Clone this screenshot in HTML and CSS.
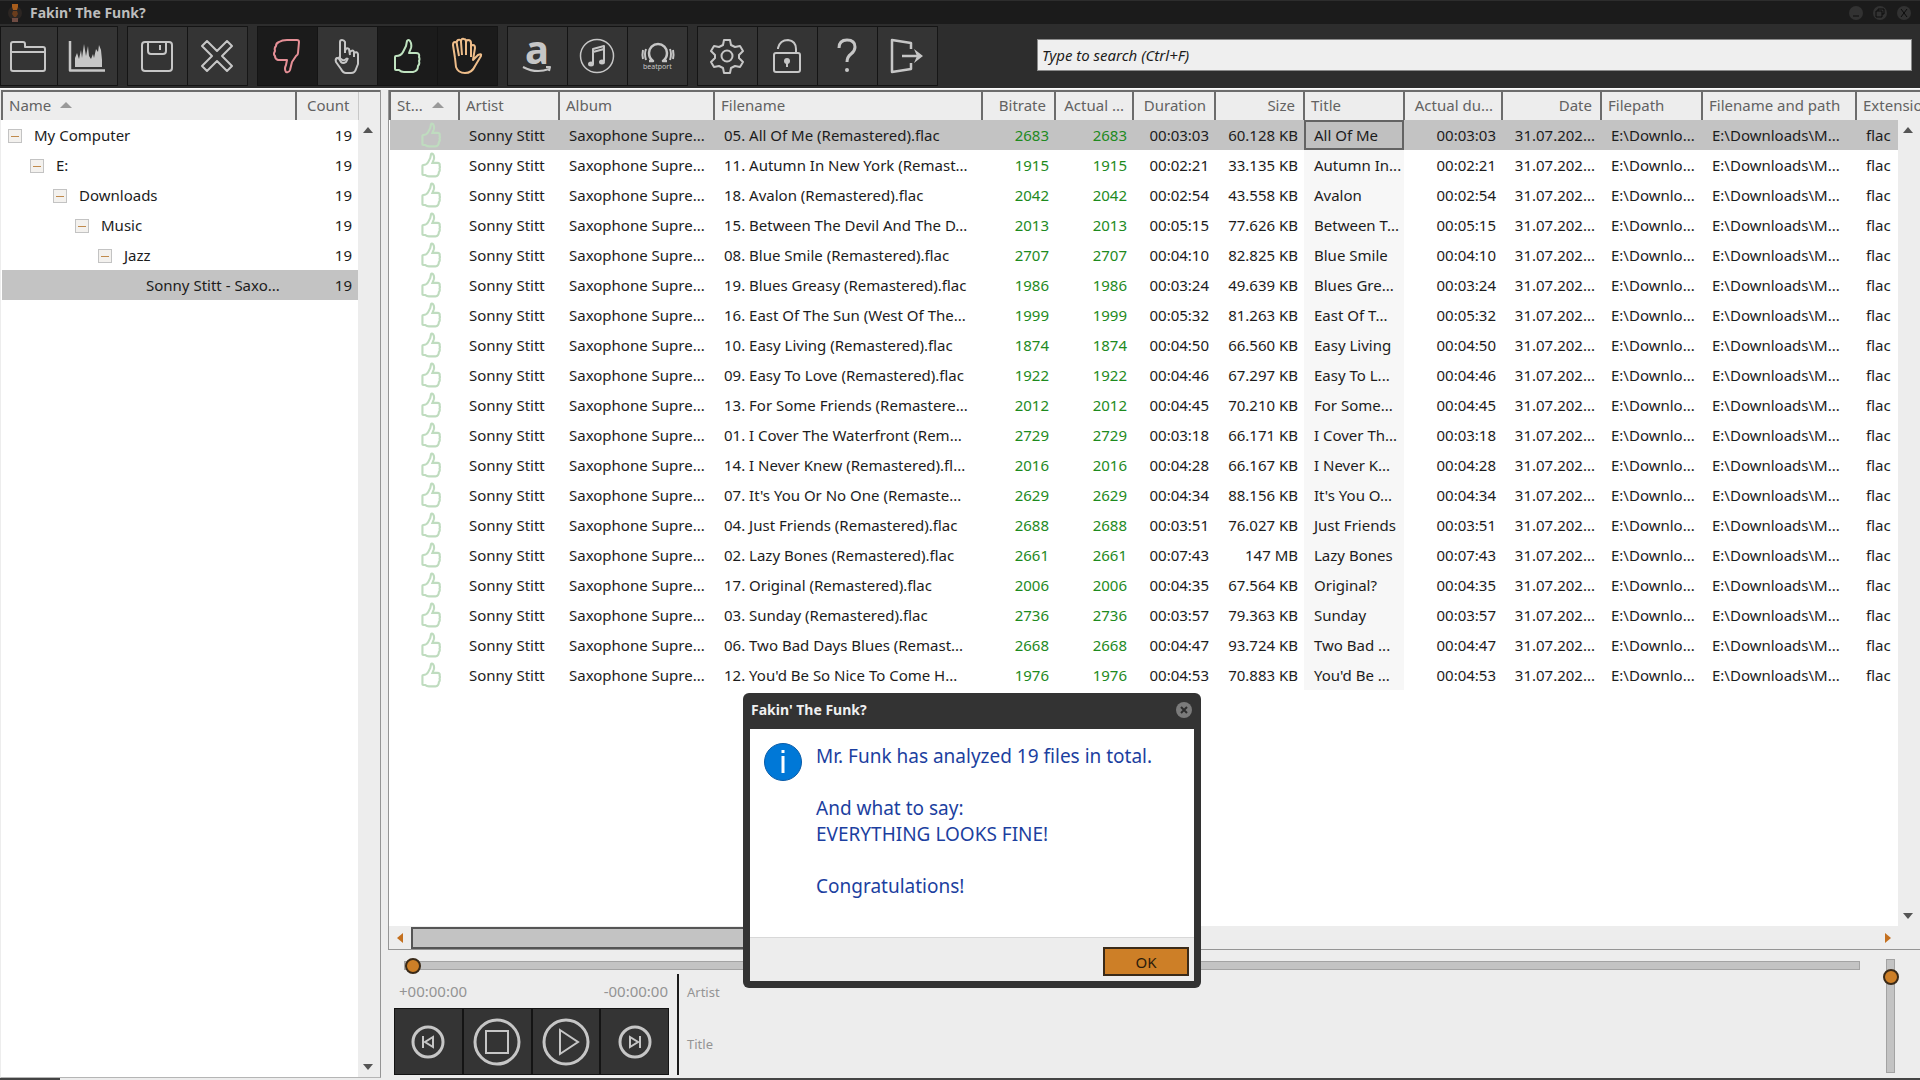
FILE: index.html
```html
<!DOCTYPE html>
<html lang="en">
<head>
<meta charset="utf-8">
<title>Fakin' The Funk?</title>
<link rel="stylesheet" href="styles.css">
</head>
<body>
<svg class="defs" aria-hidden="true">
  <symbol id="thumb" viewBox="0 0 28 36">
    <path d="M3 18 Q8 18 10 14 L13 8 L14 3 Q15 1 17 3 Q19 6 18 10 L16 15 H23 Q27 15 26 19 Q27 21 26 23 Q27 26 25 28 Q25 33 20 34 H11 Q8 34 6 32 H3 Q2 32 2 31 V19 Q2 18 3 18 Z"/>
  </symbol>
</svg>
<div class="app">
  <header class="titlebar">
    <svg class="logo" width="16" height="20" viewBox="0 0 16 20"><circle cx="8" cy="10" r="7" fill="#2c2623"/><path d="M5 1h6v3l-1 3H6L5 4z" fill="#a85d1c"/><path d="M6 8h4l1 3-2 3H7l-2-3z" fill="#6b3d1c"/><path d="M5 15h6v4H5z" fill="#6e4b42"/></svg>
    <h1 class="app-title">Fakin' The Funk?</h1>
    <div class="window-buttons">
      <button class="win" aria-label="Minimize"><svg width="16" height="16" viewBox="0 0 16 16"><circle cx="8" cy="8" r="7"/><path d="M5 11h6"/></svg></button>
      <button class="win" aria-label="Restore"><svg width="16" height="16" viewBox="0 0 16 16"><circle cx="8" cy="8" r="7"/><path d="M6 6V4h6v5h-2M4 6h6v6H4z"/></svg></button>
      <button class="win" aria-label="Close"><svg width="16" height="16" viewBox="0 0 16 16"><circle cx="8" cy="8" r="7"/><path d="M5 4l6 8M11 4l-6 8"/></svg></button>
    </div>
  </header>

  <div class="toolbar">
    <div class="group">
      <button class="tool first" aria-label="Open folder"><svg viewBox="0 0 40 40"><path d="M3 33V8q0-2 2-2h10q2 0 2 2v3h18q2 0 2 2v20q0 2-2 2H5q-2 0-2-2zM3 16h34"/></svg></button>
      <button class="tool" aria-label="Spectrum"><svg viewBox="0 0 40 40"><path d="M3 5v29.500h35" stroke-width="2.500"/><path class="solid" d="M8 31V22l2-5 2 6 2-9 1 8 2-14 2 12 2-10 1 10 2 3 2-5 1 4 2-9 2 3 1-7 2 5 1 10v7z"/></svg></button>
    </div>
    <div class="group">
      <button class="tool" aria-label="Save"><svg viewBox="0 0 40 40"><path d="M5 32V9q0-3 3-3h24q3 0 3 3v23q0 3-3 3H8q-3 0-3-3zM11 6v9q0 3 3 3h12q3 0 3-3V6M23 9v5"/></svg></button>
      <button class="tool" aria-label="Delete"><svg viewBox="0 0 40 40"><path d="M10 5l10 10L30 5l5 5-10 10 10 10-5 5-10-10-10 10-5-5 10-10L5 10z"/></svg></button>
    </div>
    <div class="group">
      <button class="tool dark red" aria-label="Fake"><svg viewBox="0 0 40 40"><path d="M12 6Q15 4 20 4H30Q32 4 32 6L31 17Q31 19 29 20L25 26 23 34Q22 37 19 36 17 33 19 29L20 24H11Q8 23 8 20 6 18 8 15 7 12 9 10 9 7 12 6Z"/></svg></button>
      <button class="tool" aria-label="Suspicious"><svg viewBox="0 0 40 40"><path d="M13 22V6q0-2 2-2t3 2v11M18 15q1-4 4-2l1 6M23 16q3-3 4 0v5M27 17q3-2 4 1v10l-2 5q-1 4-5 4h-5q-3 0-5-4l-5-7q-1-3 1-4l4 1q3 3 6-1"/><path d="M11 21l3 5q2 2 5 0l2-4"/></svg></button>
      <button class="tool dark green" aria-label="Good"><svg viewBox="0 0 40 40"><use href="#thumb" x="6" y="2" width="28" height="36"/></svg></button>
      <button class="tool dark orange" aria-label="Unchecked"><svg viewBox="0 0 40 40"><path d="M8 22L6 9q0-3 2-3 2 0 2 3l2 11M10 9q-1-4 1-5 3-1 3 2l1 13M14 6q0-4 3-3 2 0 2 3v13M19 7q0-3 2-3 3 0 3 3v14M24 11q0-2 2-2t2 3l-2 12 5-5q4-2 3 1l-6 10q-3 7-10 7-7 0-9-6L8 22"/></svg></button>
    </div>
    <div class="group">
      <button class="tool" aria-label="Amazon"><svg viewBox="0 0 40 40"><text class="letter" x="20" y="28">a</text><path d="M6 31q13 7 26 2" stroke-width="2"/><path d="M29 31l4 0-1 4"/></svg></button>
      <button class="tool" aria-label="iTunes"><svg viewBox="0 0 40 40"><circle cx="20" cy="20" r="16.500" stroke-width="1.500"/><path d="M16 28V13l11-3v15M16 16l11-3"/><ellipse class="solid" cx="14" cy="28" rx="3" ry="2.500"/><ellipse class="solid" cx="25" cy="26" rx="3" ry="2.500"/></svg></button>
      <button class="tool" aria-label="Beatport"><svg viewBox="0 0 40 40"><path d="M12 25h4q-4-3-4-8a9 9 0 0 1 18 0q0 5-4 8h4" stroke-width="2.500"/><path d="M9 13q-2 5 0 11M6 14q-1 5 0 9M33 13q2 5 0 11M36 14q1 5 0 9"/><text x="6" y="33">beatport</text></svg></button>
    </div>
    <div class="group">
      <button class="tool" aria-label="Settings"><svg viewBox="0 0 40 40"><path d="M17 4h6l1 5 4 2 5-1 3 5-4 4v3l4 4-3 5-5-1-4 2-1 5h-6l-1-5-4-2-5 1-3-5 4-4v-3l-4-4 3-5 5 1 4-2z"/><circle cx="20" cy="20" r="5.500"/></svg></button>
      <button class="tool" aria-label="Unlock"><svg viewBox="0 0 40 40"><rect x="7" y="17" width="26" height="19" rx="2"/><path d="M11 13v-1q2-8 10-8 8 1 8 9v4"/><circle class="solid" cx="20" cy="25" r="3"/><path d="M20 25v6"/></svg></button>
      <button class="tool" aria-label="Help"><svg viewBox="0 0 40 40"><path d="M12 12q0-8 8-8t8 7q0 4-4 7t-4 8" stroke-width="3"/><circle class="solid" cx="20" cy="34" r="2"/></svg></button>
      <button class="tool" aria-label="Exit"><svg viewBox="0 0 40 40"><path d="M24 13V7L5 4v32l19-3v-6M15 20h18" stroke-width="2.500"/><path class="solid" d="M27 13l9 7-9 7 3-7z"/></svg></button>
    </div>
    <input class="search" type="text" aria-label="Search" placeholder="Type to search (Ctrl+F)">
  </div>

  <main class="workspace">
    <section class="panel tree">
      <table class="grid tree-table">
        <colgroup><col><col class="w-count"><col class="w-bar"></colgroup>
        <thead><tr><th>Name <span class="sort"></span></th><th class="num">Count</th><th class="blank"></th></tr></thead>
        <tbody>
          <tr><td class="lv0"><button class="fold" aria-label="Collapse"></button>My Computer</td><td class="num">19</td><td></td></tr>
          <tr><td class="lv1"><button class="fold" aria-label="Collapse"></button>E:</td><td class="num">19</td><td></td></tr>
          <tr><td class="lv2"><button class="fold" aria-label="Collapse"></button>Downloads</td><td class="num">19</td><td></td></tr>
          <tr><td class="lv3"><button class="fold" aria-label="Collapse"></button>Music</td><td class="num">19</td><td></td></tr>
          <tr><td class="lv4"><button class="fold" aria-label="Collapse"></button>Jazz</td><td class="num">19</td><td></td></tr>
          <tr class="selected"><td class="lv5">Sonny Stitt - Saxo...</td><td class="num">19</td><td></td></tr>
        </tbody>
      </table>
      <div class="vbar"><span class="up"></span><span class="down"></span></div>
    </section>

    <div class="right">
      <section class="panel files">
        <table class="grid file-table">
          <colgroup><col class="w-state"><col class="w-artist"><col class="w-album"><col class="w-file"><col class="w-rate"><col class="w-actual"><col class="w-dur"><col class="w-size"><col class="w-artist"><col class="w-adur"><col class="w-date"><col class="w-path"><col class="w-full"><col></colgroup>
          <thead><tr><th>St... <span class="sort"></span></th><th>Artist</th><th>Album</th><th>Filename</th><th>Bitrate</th><th>Actual ...</th><th>Duration</th><th>Size</th><th>Title</th><th>Actual du...</th><th>Date</th><th>Filepath</th><th>Filename and path</th><th>Extension</th></tr></thead>
          <tbody>
<tr class="selected"><td><svg><use href="#thumb"/></svg><td>Sonny Stitt<td>Saxophone Supre...<td>05. All Of Me (Remastered).flac<td>2683<td>2683<td>00:03:03<td>60.128 KB<td>All Of Me<td>00:03:03<td>31.07.202...<td>E:\Downlo...<td>E:\Downloads\M...<td>flac
<tr><td><svg><use href="#thumb"/></svg><td>Sonny Stitt<td>Saxophone Supre...<td>11. Autumn In New York (Remast...<td>1915<td>1915<td>00:02:21<td>33.135 KB<td>Autumn In...<td>00:02:21<td>31.07.202...<td>E:\Downlo...<td>E:\Downloads\M...<td>flac
<tr><td><svg><use href="#thumb"/></svg><td>Sonny Stitt<td>Saxophone Supre...<td>18. Avalon (Remastered).flac<td>2042<td>2042<td>00:02:54<td>43.558 KB<td>Avalon<td>00:02:54<td>31.07.202...<td>E:\Downlo...<td>E:\Downloads\M...<td>flac
<tr><td><svg><use href="#thumb"/></svg><td>Sonny Stitt<td>Saxophone Supre...<td>15. Between The Devil And The D...<td>2013<td>2013<td>00:05:15<td>77.626 KB<td>Between T...<td>00:05:15<td>31.07.202...<td>E:\Downlo...<td>E:\Downloads\M...<td>flac
<tr><td><svg><use href="#thumb"/></svg><td>Sonny Stitt<td>Saxophone Supre...<td>08. Blue Smile (Remastered).flac<td>2707<td>2707<td>00:04:10<td>82.825 KB<td>Blue Smile<td>00:04:10<td>31.07.202...<td>E:\Downlo...<td>E:\Downloads\M...<td>flac
<tr><td><svg><use href="#thumb"/></svg><td>Sonny Stitt<td>Saxophone Supre...<td>19. Blues Greasy (Remastered).flac<td>1986<td>1986<td>00:03:24<td>49.639 KB<td>Blues Gre...<td>00:03:24<td>31.07.202...<td>E:\Downlo...<td>E:\Downloads\M...<td>flac
<tr><td><svg><use href="#thumb"/></svg><td>Sonny Stitt<td>Saxophone Supre...<td>16. East Of The Sun (West Of The...<td>1999<td>1999<td>00:05:32<td>81.263 KB<td>East Of T...<td>00:05:32<td>31.07.202...<td>E:\Downlo...<td>E:\Downloads\M...<td>flac
<tr><td><svg><use href="#thumb"/></svg><td>Sonny Stitt<td>Saxophone Supre...<td>10. Easy Living (Remastered).flac<td>1874<td>1874<td>00:04:50<td>66.560 KB<td>Easy Living<td>00:04:50<td>31.07.202...<td>E:\Downlo...<td>E:\Downloads\M...<td>flac
<tr><td><svg><use href="#thumb"/></svg><td>Sonny Stitt<td>Saxophone Supre...<td>09. Easy To Love (Remastered).flac<td>1922<td>1922<td>00:04:46<td>67.297 KB<td>Easy To L...<td>00:04:46<td>31.07.202...<td>E:\Downlo...<td>E:\Downloads\M...<td>flac
<tr><td><svg><use href="#thumb"/></svg><td>Sonny Stitt<td>Saxophone Supre...<td>13. For Some Friends (Remastere...<td>2012<td>2012<td>00:04:45<td>70.210 KB<td>For Some...<td>00:04:45<td>31.07.202...<td>E:\Downlo...<td>E:\Downloads\M...<td>flac
<tr><td><svg><use href="#thumb"/></svg><td>Sonny Stitt<td>Saxophone Supre...<td>01. I Cover The Waterfront (Rem...<td>2729<td>2729<td>00:03:18<td>66.171 KB<td>I Cover Th...<td>00:03:18<td>31.07.202...<td>E:\Downlo...<td>E:\Downloads\M...<td>flac
<tr><td><svg><use href="#thumb"/></svg><td>Sonny Stitt<td>Saxophone Supre...<td>14. I Never Knew (Remastered).fl...<td>2016<td>2016<td>00:04:28<td>66.167 KB<td>I Never K...<td>00:04:28<td>31.07.202...<td>E:\Downlo...<td>E:\Downloads\M...<td>flac
<tr><td><svg><use href="#thumb"/></svg><td>Sonny Stitt<td>Saxophone Supre...<td>07. It's You Or No One (Remaste...<td>2629<td>2629<td>00:04:34<td>88.156 KB<td>It's You O...<td>00:04:34<td>31.07.202...<td>E:\Downlo...<td>E:\Downloads\M...<td>flac
<tr><td><svg><use href="#thumb"/></svg><td>Sonny Stitt<td>Saxophone Supre...<td>04. Just Friends (Remastered).flac<td>2688<td>2688<td>00:03:51<td>76.027 KB<td>Just Friends<td>00:03:51<td>31.07.202...<td>E:\Downlo...<td>E:\Downloads\M...<td>flac
<tr><td><svg><use href="#thumb"/></svg><td>Sonny Stitt<td>Saxophone Supre...<td>02. Lazy Bones (Remastered).flac<td>2661<td>2661<td>00:07:43<td>147 MB<td>Lazy Bones<td>00:07:43<td>31.07.202...<td>E:\Downlo...<td>E:\Downloads\M...<td>flac
<tr><td><svg><use href="#thumb"/></svg><td>Sonny Stitt<td>Saxophone Supre...<td>17. Original (Remastered).flac<td>2006<td>2006<td>00:04:35<td>67.564 KB<td>Original?<td>00:04:35<td>31.07.202...<td>E:\Downlo...<td>E:\Downloads\M...<td>flac
<tr><td><svg><use href="#thumb"/></svg><td>Sonny Stitt<td>Saxophone Supre...<td>03. Sunday (Remastered).flac<td>2736<td>2736<td>00:03:57<td>79.363 KB<td>Sunday<td>00:03:57<td>31.07.202...<td>E:\Downlo...<td>E:\Downloads\M...<td>flac
<tr><td><svg><use href="#thumb"/></svg><td>Sonny Stitt<td>Saxophone Supre...<td>06. Two Bad Days Blues (Remast...<td>2668<td>2668<td>00:04:47<td>93.724 KB<td>Two Bad ...<td>00:04:47<td>31.07.202...<td>E:\Downlo...<td>E:\Downloads\M...<td>flac
<tr><td><svg><use href="#thumb"/></svg><td>Sonny Stitt<td>Saxophone Supre...<td>12. You'd Be So Nice To Come H...<td>1976<td>1976<td>00:04:53<td>70.883 KB<td>You'd Be ...<td>00:04:53<td>31.07.202...<td>E:\Downlo...<td>E:\Downloads\M...<td>flac
          </tbody>
        </table>
        <div class="vbar"><span class="up"></span><span class="down"></span></div>
        <div class="hbar"><span class="left"></span><div class="hthumb"></div><span class="rightward"></span></div>
      </section>

      <section class="player">
        <div class="player-main">
          <input class="seek" type="range" min="0" max="100" value="0" aria-label="Position">
          <div class="deck">
            <div class="controls">
              <div class="times"><span>+00:00:00</span><span>-00:00:00</span></div>
              <div class="buttons">
                <button class="ctl" aria-label="Previous"><svg viewBox="0 0 50 50"><circle cx="25" cy="25" r="15"/><path d="M20 19v12M30 20v10l-8-5z"/></svg></button>
                <button class="ctl" aria-label="Stop"><svg viewBox="0 0 50 50"><circle cx="25" cy="25" r="22"/><path d="M14 14h22v22h-22z"/></svg></button>
                <button class="ctl" aria-label="Play"><svg viewBox="0 0 50 50"><circle cx="25" cy="25" r="22"/><path d="M19 13v24l18-12z"/></svg></button>
                <button class="ctl" aria-label="Next"><svg viewBox="0 0 50 50"><circle cx="25" cy="25" r="15"/><path d="M30 19v12M20 20v10l8-5z"/></svg></button>
              </div>
            </div>
            <div class="now"><span>Artist</span><span>Title</span></div>
          </div>
        </div>
        <input class="volume" type="range" min="0" max="100" value="91" aria-label="Volume">
      </section>
    </div>
  </main>
  <footer class="edge"><span></span><span></span></footer>
</div>

<div class="dialog" role="dialog" aria-labelledby="dlg-title">
  <div class="dialog-head">
    <h2 class="dialog-title" id="dlg-title">Fakin' The Funk?</h2>
    <button class="dialog-close" aria-label="Close"><svg width="16" height="16" viewBox="0 0 16 16"><circle cx="8" cy="8" r="8" fill="#7b7b7b"/><path d="M5 5l6 6M11 5l-6 6" stroke="#2d2d2d" stroke-width="2"/></svg></button>
  </div>
  <div class="dialog-body">
    <svg class="info" width="38" height="38" viewBox="0 0 38 38"><circle cx="19" cy="19" r="18.500" fill="#0078d7" stroke="#0a5ca8"/><path d="M19 13v17M19 7v3" stroke="#fff" stroke-width="3"/></svg>
    <div class="message">
      <p>Mr. Funk has analyzed 19 files in total.</p>
      <p>And what to say:<br>EVERYTHING LOOKS FINE!</p>
      <p>Congratulations!</p>
    </div>
  </div>
  <div class="dialog-foot"><button class="ok">OK</button></div>
</div>
</body>
</html>
```
FILE: styles.css
```css
* { box-sizing: border-box; }
body {
  margin: 0;
  font: 15px/20px "Noto Sans", "Open Sans", sans-serif;
  color: #1c1c1c;
  background: #ededed;
}
button { padding: 0; border: 0; background: none; font: inherit; color: inherit; }
.defs { position: absolute; width: 0; height: 0; }
.app { display: flex; flex-direction: column; height: 100vh; overflow: hidden; }

/* Title bar */
.titlebar {
  display: flex;
  align-items: center;
  height: 24px;
  padding: 0 8px 0 7px;
  background: #1b1b1b;
  border-top: 1px solid #2d2d2d;
}
.app-title { flex: 1; margin: 0 0 0 7px; font-size: 14px; line-height: 20px; color: #bdbdbd; }
.window-buttons { display: flex; gap: 8px; }
.win { display: flex; }
.win svg { fill: #323232; }
.win path { fill: none; stroke-width: 1; stroke: #0c0c0c; }

/* Toolbar */
.toolbar {
  display: flex;
  flex: none;
  gap: 10px;
  height: 64px;
  padding: 2px 8px 2px 0;
  background: #2d2d2d;
}
.group { display: flex; border-right: 1px solid #161616; margin-right: -1px; }
.tool {
  display: flex;
  align-items: center;
  justify-content: center;
  width: 60px;
  height: 60px;
  padding: 0 1px 1px 0;
  background: #343434;
  border: 1px solid #141414;
  border-right: 0;
}
.tool.first { width: 57px; padding-right: 3px; }
.tool.dark { background: #1b1b1b; }
.tool svg { width: 40px; height: 40px; fill: none; stroke: #c6c6c6; stroke-width: 2; stroke-linejoin: round; }
.tool .solid { fill: #c6c6c6; stroke: none; }
.tool text { fill: #c6c6c6; stroke: none; font-size: 7px; }
.tool .letter { font-size: 40px; font-weight: 700; text-anchor: middle; }
.tool.red svg { stroke: #e58f96; }
.tool.green svg { stroke: #bfe3c0; }
.tool.orange svg { stroke: #eebd8a; }
.search {
  flex: none;
  width: 875px;
  height: 32px;
  margin: 13px 0 0 auto;
  padding: 0 4px;
  font: italic 15px/20px "Noto Sans", "Open Sans", sans-serif;
  color: #1c1c1c;
  background: #efefef;
  border: 1px solid #8a8a8a;
  border-radius: 0;
}
.search::placeholder { color: #1c1c1c; opacity: 1; }

/* Panels and tables */
.workspace { display: flex; flex: 1; gap: 7px; min-height: 0; padding-top: 1px; border-top: 1px solid #fafafa; }
.panel {
  display: grid;
  grid-template: 1fr / minmax(0, 1fr) 22px;
  min-height: 0;
  background: #fff;
  border: 1px solid #959595;
  border-top: 0;
}
.tree { width: 381px; border-left-color: #ededed; border-bottom-color: #b5b5b5; }
.right { display: flex; flex: 1; flex-direction: column; min-width: 0; }
.files { flex: 1; grid-template-rows: 1fr 23px; border-right: 0; }
.grid { grid-area: 1 / 1 / 2 / 3; align-self: start; width: 100%; table-layout: fixed; border-collapse: collapse; }
.grid th, .grid td {
  height: 30px;
  padding: 0 6px 0 10px;
  overflow: hidden;
  text-align: left;
  white-space: nowrap;
  font-weight: 400;
}
.grid th {
  padding: 0 8px 2px 6px;
  height: 29px;
  color: #626262;
  background: #ededed;
  border-left: 2px solid #6c6c6c;
}
.grid thead { border-top: 2px solid #6c6c6c; }
.grid .blank { border-left: 1px solid #c8c8c8; }
.grid .num { text-align: right; }
.grid td.num { padding-right: 6px; }
.sort {
  display: inline-block;
  margin-left: 5px;
  vertical-align: 3px;
  border: 6px solid transparent;
  border-top: 0;
  border-bottom: 6px solid #999;
}
.selected { background: #c3c3c3; }
.w-count { width: 62px; }
.w-bar { width: 22px; }
.lv0 { --indent: 6px; }
.lv1 { --indent: 28px; }
.lv2 { --indent: 51px; }
.lv3 { --indent: 73px; }
.lv4 { --indent: 96px; }
.lv5 { --indent: 144px; }
.tree-table td:first-child { padding: 0 0 0 var(--indent); }
.fold {
  width: 14px;
  height: 14px;
  margin-right: 12px;
  vertical-align: -1px;
  border: 1px solid #c3c3c3;
  background: linear-gradient(#c08a4c, #c08a4c) center / 8px 1px no-repeat #f3f1ee;
}
.w-state { width: 69px; }
.w-artist { width: 100px; }
.w-album { width: 155px; }
.w-file { width: 268px; }
.w-rate { width: 73px; }
.w-actual { width: 78px; }
.w-dur { width: 82px; }
.w-size { width: 89px; }
.w-adur { width: 98px; }
.w-date { width: 99px; }
.w-path { width: 101px; }
.w-full { width: 154px; }
.file-table :is(th, td):is(:nth-child(5), :nth-child(6), :nth-child(7), :nth-child(8), :nth-child(10), :nth-child(11)) { text-align: right; }
.file-table td:is(:nth-child(5), :nth-child(6)) { color: #1e8a1e; }
.file-table td:nth-child(9) { background: #f7f7f7; }
.file-table .selected td:nth-child(9) { background: #c0c0c0; outline: 2px solid #636363; outline-offset: -2px; }
.file-table td:first-child { padding: 0 0 0 31px; }
.file-table svg { display: block; width: 20px; height: 26px; fill: none; stroke: #bfdcbf; stroke-width: 3; }

/* Scroll bars */
.vbar {
  grid-area: 1 / 2;
  display: flex;
  flex-direction: column;
  align-items: center;
  justify-content: space-between;
  margin-top: 30px;
  padding: 7px 2px 7px 0;
  background: #ededed;
}
.up, .down { border: 5px solid transparent; }
.up { border-top: 0; border-bottom: 6px solid #555; }
.down { border-bottom: 0; border-top: 6px solid #555; }
.hbar { grid-area: 2 / 1 / 3 / 3; display: flex; align-items: center; padding: 0 29px 0 8px; background: #ededed; }
.hthumb { width: 50%; height: 22px; margin-left: 8px; background: #c3c3c3; border: 2px solid #555; }
.left { border: 5px solid transparent; border-left: 0; border-right: 6px solid #c4701f; }
.rightward { margin-left: auto; border: 5px solid transparent; border-right: 0; border-left: 6px solid #c4701f; }

/* Player */
.player { display: flex; flex: none; height: 128px; padding: 6px 22px 3px 6px; }
.player-main { display: flex; flex: 1; flex-direction: column; }
input[type="range"] { appearance: none; display: block; background: none; }
.player .seek { height: 20px; margin: 0 22px 0 10px; }
.seek::-webkit-slider-runnable-track { height: 9px; background: #c3c3c3; border: 1px solid #a3a3a3; }
input::-webkit-slider-thumb {
  appearance: none;
  width: 16px;
  height: 16px;
  background: #cd7f27;
  border: 2px solid #3a2a18;
  border-radius: 50%;
}
.seek::-webkit-slider-thumb { margin-top: -4px; }
.player .volume {
  width: 16px;
  height: 114px;
  margin: 3px 0 0;
  writing-mode: vertical-lr;
  direction: rtl;
}
.volume::-webkit-slider-runnable-track { width: 9px; background: #c3c3c3; border: 1px solid #a3a3a3; }
.volume::-webkit-slider-thumb { margin-left: -4px; }
.deck { display: flex; gap: 8px; }
.controls { width: 275px; }
.times { display: flex; justify-content: space-between; height: 34px; padding: 7px 1px 0 5px; color: #949494; }
.buttons { display: flex; border: 1px solid #141414; background: #141414; gap: 2px; }
.ctl { display: flex; flex: 1; align-items: center; justify-content: center; height: 65px; background: #343434; }
.ctl svg { width: 50px; height: 50px; fill: none; stroke: #c6c6c6; stroke-width: 3; }
.ctl path { stroke-width: 2; }
.now {
  display: flex;
  flex-direction: column;
  gap: 32px;
  padding: 8px 0 0 8px;
  font-size: 13px;
  color: #949494;
  border-left: 2px solid #1b1b1b;
}
.edge { display: flex; flex: none; gap: 360px; height: 2px; }
.edge span { width: 60px; background: #444; }
.edge span + span { flex: 1; }

/* Message dialog floating over the window */
.dialog {
  position: absolute;
  left: 743px;
  top: 693px;
  width: 458px;
  padding: 0 7px 7px;
  background: #333;
  border-radius: 6px;
}
.dialog-head { display: flex; align-items: center; justify-content: space-between; height: 36px; padding: 0 2px 2px 1px; }
.dialog-title { margin: 0; font-size: 14px; line-height: 20px; color: #f0f0f0; }
.dialog-close { display: flex; }
.dialog-body { display: flex; gap: 14px; height: 208px; padding: 14px; background: #fff; }
.message { font-size: 19px; line-height: 26px; color: #1c3fa0; white-space: nowrap; }
.message p { margin: 0 0 26px; }
.dialog-foot { display: flex; justify-content: flex-end; padding: 9px 5px 5px; background: #ededed; border-top: 1px solid #d8d8d8; }
.ok { width: 86px; height: 29px; background: #cd7f27; border: 2px solid #3a2a18; color: #2b1c0c; }
```
